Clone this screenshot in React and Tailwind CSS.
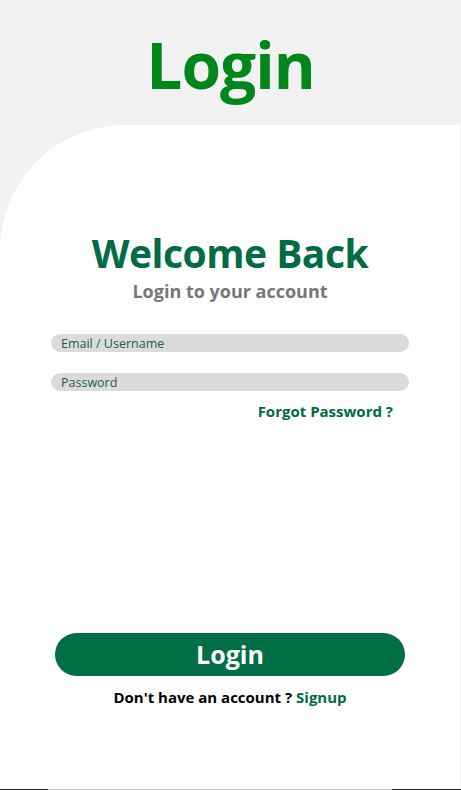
export default function App() {
  return (
    <div className="w-[461px] h-[790px] bg-[#f2f2f2] flex flex-col font-['Open_Sans',sans-serif] overflow-hidden">
      <div className="h-[125px] flex justify-center pt-[33px]">
        <h1 className="text-[64px] font-bold text-[#00861a] leading-none tracking-[-1px]">Login</h1>
      </div>
      <div className="flex-1 bg-white rounded-tl-[125px] mr-px flex flex-col items-center">
        <h2 className="mt-[108px] text-[39px] font-bold text-[#006b45] leading-none tracking-[-0.5px]">Welcome Back</h2>
        <p className="mt-[10px] text-[18px] font-bold text-[#777777] leading-none">Login to your account</p>
        <div className="mt-[34px] w-[358px] flex flex-col gap-[21px]">
          <input
            className="h-[18px] w-full rounded-full bg-[#dbdbdb] px-[10px] text-[12.5px] leading-none text-[#1d5e4a] placeholder:text-[#1d5e4a] outline-none"
            placeholder="Email / Username"
          />
          <input
            type="password"
            className="h-[18px] w-full rounded-full bg-[#dbdbdb] px-[10px] text-[12.5px] leading-none text-[#1d5e4a] placeholder:text-[#1d5e4a] outline-none"
            placeholder="Password"
          />
        </div>
        <div className="w-[358px] flex justify-end pr-[16px] mt-[13px]">
          <a className="text-[15px] font-bold text-[#006b45] leading-none">Forgot Password ?</a>
        </div>
        <button className="mt-[214px] w-[350px] h-[43px] rounded-full bg-[#006f46] text-white text-[25px] font-bold leading-none flex items-center justify-center">
          Login
        </button>
        <p className="mt-[14px] text-[15px] font-bold text-black leading-none">
          Don't have an account ? <span className="text-[#006b45]">Signup</span>
        </p>
      </div>
      <div className="h-px flex shrink-0">
        <div className="w-[48px] bg-[#2b2b2b]" />
        <div className="flex-1 bg-[#c4c4c4]" />
        <div className="w-[69px] bg-[#2b2b2b]" />
      </div>
    </div>
  );
}
